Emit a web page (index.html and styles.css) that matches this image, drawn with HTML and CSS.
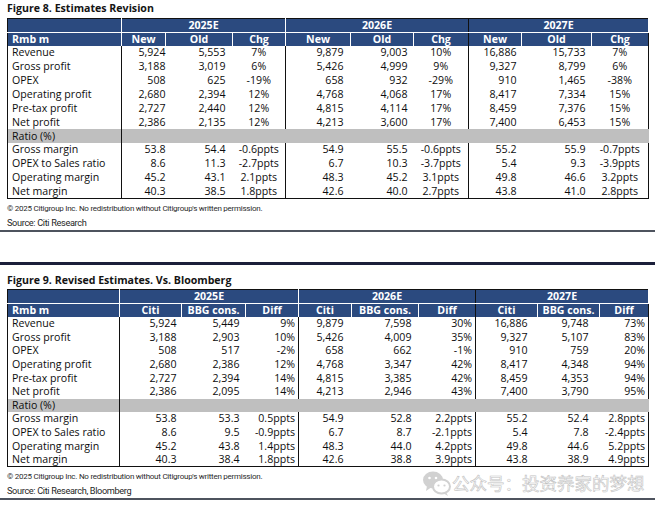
FILE: index.html
```html
<!DOCTYPE html>
<html>
<head>
<meta charset="utf-8">
<link rel="stylesheet" href="styles.css">
</head>
<body>
<section class="fig">
  <h2 class="title">Figure 8. Estimates Revision</h2>
  <table class="est t1">
    <colgroup>
      <col style="width:114px"><col style="width:44px"><col style="width:67px"><col style="width:53px">
      <col style="width:65px"><col style="width:63px"><col style="width:55px">
      <col style="width:53px"><col style="width:70px"><col style="width:57px">
    </colgroup>
    <thead>
      <tr class="h1"><th class="corner"></th><th colspan="3" class="wsep">2025E</th><th colspan="3" class="bsep">2026E</th><th colspan="3">2027E</th></tr>
      <tr class="h2"><th class="lbl">Rmb m</th><th>New</th><th>Old</th><th>Chg</th><th>New</th><th>Old</th><th class="bsep">Chg</th><th>New</th><th>Old</th><th class="last">Chg</th></tr>
    </thead>
    <tbody>
      <tr><td>Revenue</td><td>5,924</td><td>5,553</td><td>7%</td><td>9,879</td><td>9,003</td><td>10%</td><td>16,886</td><td>15,733</td><td>7%</td></tr>
      <tr><td>Gross profit</td><td>3,188</td><td>3,019</td><td>6%</td><td>5,426</td><td>4,999</td><td>9%</td><td>9,327</td><td>8,799</td><td>6%</td></tr>
      <tr><td>OPEX</td><td>508</td><td>625</td><td>-19%</td><td>658</td><td>932</td><td>-29%</td><td>910</td><td>1,465</td><td>-38%</td></tr>
      <tr><td>Operating profit</td><td>2,680</td><td>2,394</td><td>12%</td><td>4,768</td><td>4,068</td><td>17%</td><td>8,417</td><td>7,334</td><td>15%</td></tr>
      <tr><td>Pre-tax profit</td><td>2,727</td><td>2,440</td><td>12%</td><td>4,815</td><td>4,114</td><td>17%</td><td>8,459</td><td>7,376</td><td>15%</td></tr>
      <tr><td>Net profit</td><td>2,386</td><td>2,135</td><td>12%</td><td>4,213</td><td>3,600</td><td>17%</td><td>7,400</td><td>6,453</td><td>15%</td></tr>
      <tr class="ratio"><td>Ratio (%)</td><td colspan="9" class="fill"></td></tr>
      <tr><td>Gross margin</td><td>53.8</td><td>54.4</td><td>-0.6ppts</td><td>54.9</td><td>55.5</td><td>-0.6ppts</td><td>55.2</td><td>55.9</td><td>-0.7ppts</td></tr>
      <tr><td>OPEX to Sales ratio</td><td>8.6</td><td>11.3</td><td>-2.7ppts</td><td>6.7</td><td>10.3</td><td>-3.7ppts</td><td>5.4</td><td>9.3</td><td>-3.9ppts</td></tr>
      <tr><td>Operating margin</td><td>45.2</td><td>43.1</td><td>2.1ppts</td><td>48.3</td><td>45.2</td><td>3.1ppts</td><td>49.8</td><td>46.6</td><td>3.2ppts</td></tr>
      <tr><td>Net margin</td><td>40.3</td><td>38.5</td><td>1.8ppts</td><td>42.6</td><td>40.0</td><td>2.7ppts</td><td>43.8</td><td>41.0</td><td>2.8ppts</td></tr>
    </tbody>
  </table>
  <p class="note">© 2025 Citigroup Inc. No redistribution without Citigroup's written permission.</p>
  <p class="src">Source: Citi Research</p>
</section>
<div class="rule"></div>
<div class="navy"></div>
<section class="fig fig2">
  <h2 class="title">Figure 9. Revised Estimates. Vs. Bloomberg</h2>
  <table class="est t2">
    <colgroup>
      <col style="width:112px"><col style="width:62px"><col style="width:64px"><col style="width:53px">
      <col style="width:53px"><col style="width:67px"><col style="width:57px">
      <col style="width:62px"><col style="width:62px"><col style="width:49px">
    </colgroup>
    <thead>
      <tr class="h1"><th class="corner"></th><th colspan="3" class="wsep">2025E</th><th colspan="3" class="bsep">2026E</th><th colspan="3">2027E</th></tr>
      <tr class="h2"><th class="lbl">Rmb m</th><th>Citi</th><th>BBG cons.</th><th>Diff</th><th>Citi</th><th>BBG cons.</th><th class="bsep">Diff</th><th>Citi</th><th>BBG cons.</th><th class="last">Diff</th></tr>
    </thead>
    <tbody>
      <tr><td>Revenue</td><td>5,924</td><td>5,449</td><td>9%</td><td>9,879</td><td>7,598</td><td>30%</td><td>16,886</td><td>9,748</td><td>73%</td></tr>
      <tr><td>Gross profit</td><td>3,188</td><td>2,903</td><td>10%</td><td>5,426</td><td>4,009</td><td>35%</td><td>9,327</td><td>5,107</td><td>83%</td></tr>
      <tr><td>OPEX</td><td>508</td><td>517</td><td>-2%</td><td>658</td><td>662</td><td>-1%</td><td>910</td><td>759</td><td>20%</td></tr>
      <tr><td>Operating profit</td><td>2,680</td><td>2,386</td><td>12%</td><td>4,768</td><td>3,347</td><td>42%</td><td>8,417</td><td>4,348</td><td>94%</td></tr>
      <tr><td>Pre-tax profit</td><td>2,727</td><td>2,394</td><td>14%</td><td>4,815</td><td>3,385</td><td>42%</td><td>8,459</td><td>4,353</td><td>94%</td></tr>
      <tr><td>Net profit</td><td>2,386</td><td>2,095</td><td>14%</td><td>4,213</td><td>2,946</td><td>43%</td><td>7,400</td><td>3,790</td><td>95%</td></tr>
      <tr class="ratio"><td>Ratio (%)</td><td colspan="9" class="fill"></td></tr>
      <tr><td>Gross margin</td><td>53.8</td><td>53.3</td><td>0.5ppts</td><td>54.9</td><td>52.8</td><td>2.2ppts</td><td>55.2</td><td>52.4</td><td>2.8ppts</td></tr>
      <tr><td>OPEX to Sales ratio</td><td>8.6</td><td>9.5</td><td>-0.9ppts</td><td>6.7</td><td>8.7</td><td>-2.1ppts</td><td>5.4</td><td>7.8</td><td>-2.4ppts</td></tr>
      <tr><td>Operating margin</td><td>45.2</td><td>43.8</td><td>1.4ppts</td><td>48.3</td><td>44.0</td><td>4.2ppts</td><td>49.8</td><td>44.6</td><td>5.2ppts</td></tr>
      <tr><td>Net margin</td><td>40.3</td><td>38.4</td><td>1.8ppts</td><td>42.6</td><td>38.8</td><td>3.9ppts</td><td>43.8</td><td>38.9</td><td>4.9ppts</td></tr>
    </tbody>
  </table>
  <p class="note">© 2025 Citigroup Inc. No redistribution without Citigroup's written permission.</p>
  <p class="src">Source: Citi Research, Bloomberg</p>
</section>
<div class="rule"></div>

<div class="watermark">
  <svg class="wechat" width="30" height="28" viewBox="0 0 30 28">
    <ellipse cx="11" cy="11" rx="10" ry="8.5" fill="#c9c9c9"/>
    <path d="M5 17 L4 22 L9 18.5 Z" fill="#c9c9c9"/>
    <circle cx="7.5" cy="9" r="1.3" fill="#fff"/>
    <circle cx="14" cy="9" r="1.3" fill="#fff"/>
    <ellipse cx="19.5" cy="17.5" rx="8.5" ry="7" fill="#fff" stroke="#c9c9c9" stroke-width="2"/>
    <path d="M24 23 L26 27 L21 24 Z" fill="#c9c9c9"/>
    <circle cx="16.5" cy="16.5" r="1.1" fill="#c9c9c9"/>
    <circle cx="22.5" cy="16.5" r="1.1" fill="#c9c9c9"/>
  </svg>
  <span class="wm-text">公众号：投资养家的梦想</span>
</div>
</body>
</html>
```
FILE: styles.css
```css
* { box-sizing: border-box; }

body {
  margin: 0;
  width: 658px;
  height: 508px;
  position: relative;
  overflow: hidden;
  background: #fff;
  color: #111;
  font-family: "Open Sans", "Liberation Sans", sans-serif;
}

.fig { padding-left: 7px; }
.fig2 { padding-top: 7px; }

.title {
  margin: 0;
  font-size: 10.6px;
  font-weight: 700;
  line-height: 16px;
  color: #141414;
}

.est {
  border-collapse: collapse;
  table-layout: fixed;
  width: 641px;
  border: 1.5px solid #111;
  font-size: 10.6px;
  line-height: 13px;
  margin-top: 2px;
}
.t2 { margin-top: 1px; }

.est th {
  background: #2b4a7f;
  color: #fff;
  font-weight: 700;
  padding: 0;
  text-align: center;
  white-space: nowrap;
  border-right: 1px solid #fff;
}
.est .h1 th { border-bottom: 1px solid #fff; }
.est th.bsep { border-right: 1.5px solid #111; }
.est th.lbl { text-align: left; padding-left: 4px; }
.est th.last { border-right: 1.5px solid #111; }

.t1 thead tr { height: 13.5px; }
.t1 tbody tr { height: 13.86px; }
.t2 .h1 { height: 12.7px; }
.t2 .h2 { height: 13.3px; }
.t2 tbody tr { height: 13.6px; }

.est td {
  padding: 0;
  white-space: nowrap;
  text-align: right;
  color: #0d0d0d;
}
.est td:first-child {
  text-align: left;
  padding-left: 4px;
  border-right: 1.5px solid #111;
}
.est tbody td:nth-child(5),
.est tbody td:nth-child(8) { border-left: 1.5px solid #111; }

.est .ratio td { background: #bfbfbf; }
.est .ratio td.fill { border-right: 1.5px solid #bfbfbf; }

/* Figure 8 column alignment */
.t1 tbody td:nth-child(2) { padding-right: 0; }
.t1 tbody td:nth-child(3) { padding-right: 7px; }
.t1 tbody td:nth-child(4),
.t1 tbody td:nth-child(7),
.t1 tbody td:nth-child(10) { text-align: center; }
.t1 tbody td:nth-child(5) { padding-right: 7px; }
.t1 tbody td:nth-child(6) { padding-right: 6px; }
.t1 tbody td:nth-child(8) { padding-right: 5px; }
.t1 tbody td:nth-child(9) { padding-right: 6px; }

/* Figure 9 column alignment */
.t2 tbody td:nth-child(2) { padding-right: 5px; }
.t2 tbody td:nth-child(3) { padding-right: 6px; }
.t2 tbody td:nth-child(4) { padding-right: 3px; }
.t2 tbody td:nth-child(5) { padding-right: 8px; }
.t2 tbody td:nth-child(6) { padding-right: 7px; }
.t2 tbody td:nth-child(7) { padding-right: 3px; }
.t2 tbody td:nth-child(8) { padding-right: 10px; }
.t2 tbody td:nth-child(9) { padding-right: 11px; }
.t2 tbody td:nth-child(10) { padding-right: 3px; }

.note {
  margin: 4px 0 0;
  font-family: "Roboto", "Liberation Sans", sans-serif;
  font-size: 8px;
  letter-spacing: -0.25px;
  line-height: 11px;
  color: #2a2a2a;
}
.src {
  margin: 3px 0 0;
  font-family: "Roboto", "Liberation Sans", sans-serif;
  font-size: 9.2px;
  letter-spacing: -0.35px;
  line-height: 11px;
  color: #1f1f1f;
}

.rule {
  width: 655px;
  height: 2px;
  margin-top: 2px;
  background: #4e535e;
}
.navy {
  width: 655px;
  height: 3px;
  margin-top: 30px;
  background: #1b1f3a;
}

.watermark {
  position: absolute;
  left: 422px;
  top: 468px;
  display: flex;
  align-items: center;
  gap: 0;
  opacity: 0.85;
}
.wm-text {
  font-family: "Noto Sans CJK SC", sans-serif;
  font-size: 17.5px;
  line-height: 30px;
  color: rgba(255, 255, 255, 0.7);
  -webkit-text-stroke: 0.6px #b8b8b8;
}
```
